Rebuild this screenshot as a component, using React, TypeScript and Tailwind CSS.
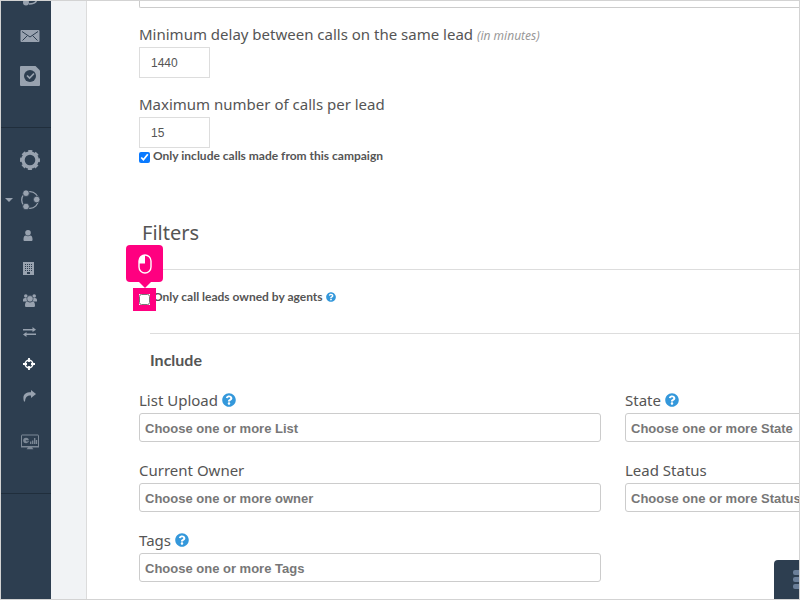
import type { ReactNode } from "react";
import { FaQuestionCircle } from "react-icons/fa";

function HeadsetIcon() {
    return (
        <svg className="w-5 h-5" viewBox="0 0 20 20" fill="none" stroke="currentColor" strokeWidth="1.5">
            <path d="M2 12V9a7 7 0 0 1 14 0v3M17 12c0 4-3 6-8 6" />
            <circle cx="6" cy="16.500" r="3" fill="currentColor" stroke="none" />
        </svg>
    );
}

function EnvelopeIcon() {
    return (
        <svg className="w-5 h-3" viewBox="0 0 20 12">
            <rect x="0.500" width="19" height="12" rx="1" fill="currentColor" />
            <path d="M2 1.500l8 5.500 8-5.500M2.500 10.500l5-5M17.500 10.500l-5-5" fill="none" stroke="#2d3e50" strokeWidth="1" />
        </svg>
    );
}

function TaskIcon() {
    return (
        <svg className="w-5 h-5" viewBox="0 0 20 20">
            <path d="M1 0h14.500L20 4.500V19a1 1 0 0 1-1 1H1a1 1 0 0 1-1-1V1a1 1 0 0 1 1-1z" fill="currentColor" />
            <circle cx="10" cy="10" r="6" fill="#2d3e50" />
            <path d="M7 9.500l2.600 2.600 4.400-4.600" fill="none" stroke="currentColor" strokeWidth="1.700" />
        </svg>
    );
}

function GearIcon() {
    return (
        <svg className="w-5 h-5" viewBox="0 0 20 20" fill="none" stroke="currentColor">
            <circle cx="10" cy="10" r="8.500" strokeWidth="3" strokeDasharray="3.900 2.776" strokeDashoffset="1.950" />
            <circle cx="10" cy="10" r="7" strokeWidth="3.400" />
        </svg>
    );
}

function CampaignIcon() {
    return (
        <svg className="w-5 h-5" viewBox="0 0 20 20">
            <circle cx="10" cy="10" r="8.300" fill="none" stroke="currentColor" strokeWidth="1.300" />
            <g fill="currentColor" stroke="#2d3e50" strokeWidth="0.800">
                <circle cx="6" cy="3.200" r="3.300" />
                <circle cx="16.700" cy="9.500" r="3.300" />
                <circle cx="6" cy="16.500" r="3.300" />
            </g>
        </svg>
    );
}

function UserIcon() {
    return (
        <svg className="w-2.5 h-3" viewBox="0 0 10 12" fill="currentColor">
            <circle cx="5" cy="2.800" r="2.800" />
            <path d="M0.500 9c0-2 .8-3.600 2.200-3.600 1.400 1 3.200 1 4.600 0C8.700 5.400 9.500 7 9.500 9v1c0 .7-.5 1-1.300 1H1.800c-.8 0-1.300-.3-1.300-1z" />
        </svg>
    );
}

function BuildingIcon() {
    return (
        <svg className="w-3 h-[13px]" viewBox="0 0 12 13">
            <path d="M0 0h11v13H0z" fill="currentColor" />
            <path d="M2 2.500h7M2 4.500h7M2 6.500h7M2 8.500h7" stroke="#2d3e50" strokeDasharray="1 1" />
            <path d="M4 10h3v2H4z" fill="#2d3e50" />
        </svg>
    );
}

function GroupIcon() {
    return (
        <svg className="w-3.5 h-[13px]" viewBox="0 0 14 13" fill="currentColor">
            <circle cx="2.800" cy="2" r="1.800" />
            <circle cx="11.200" cy="2" r="1.800" />
            <path d="M0 7.500V6c0-1.300.8-2 2-2h2v3.500zM14 7.500V6c0-1.300-.8-2-2-2h-2v3.500z" />
            <circle cx="7" cy="4.800" r="3.200" stroke="#2d3e50" strokeWidth="0.600" />
            <path d="M2 11.500c0-2.500.8-4 2.500-4 1.600 1.200 3.400 1.200 5 0 1.700 0 2.500 1.500 2.500 4 0 1-.6 1.500-1.500 1.500h-7c-.9 0-1.500-.5-1.500-1.500z" />
        </svg>
    );
}

function ExchangeIcon() {
    return (
        <svg className="w-[13px] h-2.5" viewBox="0 0 13 10" fill="currentColor">
            <path d="M0 2h9.500V0L13 2.700 9.500 5V3.400H0zM13 6.600H3.500V5L0 7.400 3.500 10V8H13z" />
        </svg>
    );
}

function CrosshairIcon() {
    return (
        <svg className="w-3 h-3 text-white" viewBox="0 0 12 12" fill="none" stroke="currentColor">
            <circle cx="6" cy="6" r="3.800" strokeWidth="1.500" />
            <path d="M6 0v4M6 8v4M0 6h4M8 6h4" strokeWidth="1.800" />
        </svg>
    );
}

function ForwardIcon() {
    return (
        <svg className="w-[13px] h-3" viewBox="0 0 13 12" fill="currentColor">
            <path d="M8 0l5 4-5 4V5.600C4.500 5.400 2.600 6.500 2 11.500H1C-.8 5.500 1.500 2.300 8 2.300z" />
        </svg>
    );
}

function MonitorIcon() {
    return (
        <svg className="w-5 h-4 opacity-75" viewBox="0 0 20 16">
            <rect x="1.500" y="1" width="17" height="11.500" rx="0.500" fill="none" stroke="currentColor" />
            <path d="M1 12h18v1.500H1zM8 13.500h4l1.500 1.700h-7z" fill="currentColor" />
            <circle cx="6" cy="6.500" r="2.800" fill="currentColor" />
            <path d="M6 6.500h3M6 6.500l2 2" stroke="#2d3e50" strokeWidth="0.700" />
            <path d="M10.700 10V7.500M12.700 10V6.500M14.700 10V4M16.500 10V6" stroke="currentColor" strokeWidth="1.300" />
        </svg>
    );
}

function NavItem({ label, children }: { label: string; children: ReactNode }) {
    return (
        <a href="#" aria-label={label} className="flex items-center h-10 pl-[19px]">
            {children}
        </a>
    );
}

function SubItem({ label, children }: { label: string; children: ReactNode }) {
    return (
        <a href="#" aria-label={label} className="flex items-center h-8 pl-[22px]">
            {children}
        </a>
    );
}

function Sidebar() {
    return (
        <nav className="w-[50px] shrink-0 overflow-hidden bg-[#2d3e50] text-[#98a2af]">
            <div className="-mt-[25px] pb-[31px] border-b border-[#202e3c]">
                <NavItem label="Calls"><HeadsetIcon /></NavItem>
                <NavItem label="Messages"><EnvelopeIcon /></NavItem>
                <NavItem label="Tasks"><TaskIcon /></NavItem>
            </div>
            <div className="pt-3 pb-[31px] border-b border-[#202e3c]">
                <NavItem label="Settings"><GearIcon /></NavItem>
                <a href="#" aria-label="Campaigns" className="flex items-center h-10 gap-[7px] pl-1">
                    <svg className="w-2 h-1" viewBox="0 0 8 4" fill="currentColor">
                        <path d="M0 0h8L4 4z" />
                    </svg>
                    <CampaignIcon />
                </a>
                <SubItem label="Users"><UserIcon /></SubItem>
                <SubItem label="Offices"><BuildingIcon /></SubItem>
                <SubItem label="Teams"><GroupIcon /></SubItem>
                <SubItem label="Transfers"><ExchangeIcon /></SubItem>
                <SubItem label="Targets"><CrosshairIcon /></SubItem>
                <SubItem label="Forwarding"><ForwardIcon /></SubItem>
                <div className="pt-2.5">
                    <NavItem label="Dashboards"><MonitorIcon /></NavItem>
                </div>
            </div>
        </nav>
    );
}

function NumberField({ id, label, hint, value }: { id: string; label: string; hint?: string; value: string }) {
    return (
        <div>
            <label htmlFor={id} className="block text-[15px] leading-[26px]">
                {label} {hint && <em className="text-xs text-[#999]">{hint}</em>}
            </label>
            <input
                id={id}
                type="text"
                defaultValue={value}
                className="block w-[71px] h-[31px] pl-[11px] border border-[#ddd] font-['Liberation_Sans',sans-serif] text-xs"
            />
        </div>
    );
}

function FilterField({ id, label, placeholder, help }: { id: string; label: string; placeholder: string; help?: boolean }) {
    return (
        <div>
            <div className="flex items-center gap-1">
                <label htmlFor={id} className="text-[15px] leading-[26px]">{label}</label>
                {help && <FaQuestionCircle className="w-3.5 h-3.5 text-[#3498db]" />}
            </div>
            <input
                id={id}
                type="text"
                placeholder={placeholder}
                className="block w-full h-[29px] px-[5px] pt-0.5 border border-[#ccc] rounded-[3px] font-['Liberation_Sans',sans-serif] text-[13px] font-bold placeholder:text-[#777]"
            />
        </div>
    );
}

// click hint that sits over the checkbox
function ClickMarker() {
    return (
        <div className="absolute -left-[13px] -top-[44px] flex flex-col items-center w-[37px] pointer-events-none">
            <div className="flex items-center justify-center w-full h-[37px] rounded bg-[#ff0080]">
                <svg className="w-3.5 h-5" viewBox="0 0 14 20">
                    <rect x="1" y="1" width="12" height="18" rx="6" fill="none" stroke="#fff" strokeWidth="1.400" />
                    <path d="M7 1v8.500H1V7a6 6 0 0 1 6-6z" fill="#fff" />
                </svg>
            </div>
            <svg className="w-3 h-1.5" viewBox="0 0 12 6" fill="#ff0080">
                <path d="M0 0h12L6 6z" />
            </svg>
            <div className="w-[23px] h-[23px] border-[6px] border-[#ff0080]" />
        </div>
    );
}

export default function App() {
    return (
        <div className="relative flex min-h-screen overflow-hidden border border-[#d3d3d3] bg-white text-[#555] font-['Noto_Sans',sans-serif]">
            <Sidebar />
            <div className="w-9 shrink-0 bg-[#f1f3f5] border-r border-[#dcdcdc]" />
            <main className="flex-1 min-w-0 overflow-hidden pl-[52px] pb-4">
                <textarea
                    aria-label="Notes"
                    className="block w-full h-[7px] mb-[13px] border border-t-0 border-r-0 border-[#ccc] rounded-bl-xs resize-none"
                />
                <section>
                    <div className="flex flex-col gap-[13px]">
                        <NumberField id="delay" label="Minimum delay between calls on the same lead" hint="(in minutes)" value="1440" />
                        <NumberField id="max-calls" label="Maximum number of calls per lead" value="15" />
                    </div>
                    <div className="flex items-start gap-[3px] h-4 font-['Lato',sans-serif] text-xs leading-4 font-bold">
                        <input id="campaign-only" type="checkbox" defaultChecked className="w-[11px] h-[11px] mt-1 accent-[#0a7aff]" />
                        <label htmlFor="campaign-only">Only include calls made from this campaign</label>
                    </div>
                </section>

                <section className="mt-[53px]">
                    <h2 className="pl-[3px] text-xl leading-8">Filters</h2>
                    <hr className="mt-5 border-[#ddd]" />
                    <div className="relative flex items-start gap-[3px] h-4 mt-[19px] font-['Lato',sans-serif] text-xs leading-4 font-bold">
                        <input id="owned" type="checkbox" className="w-[11px] h-[11px] mt-[5px]" />
                        <label htmlFor="owned">Only call leads owned by agents</label>
                        <FaQuestionCircle className="w-2.5 h-2.5 self-center text-[#3498db]" />
                        <ClickMarker />
                    </div>
                    <hr className="mt-7 ml-[11px] border-[#ddd]" />
                    <h3 className="mt-3.5 pl-[11px] font-['Lato',sans-serif] text-base leading-6 font-bold">Include</h3>
                    <div className="grid grid-cols-[70%_70%] gap-x-6 gap-y-[15px] mt-[15px]">
                        <FilterField id="list" label="List Upload" placeholder="Choose one or more List" help />
                        <FilterField id="state" label="State" placeholder="Choose one or more State" help />
                        <FilterField id="owner" label="Current Owner" placeholder="Choose one or more owner" />
                        <FilterField id="status" label="Lead Status" placeholder="Choose one or more Status" />
                        <FilterField id="tags" label="Tags" placeholder="Choose one or more Tags" help />
                    </div>
                </section>
            </main>
            <button
                type="button"
                aria-label="Open panel"
                className="absolute right-0 bottom-0 flex flex-col items-end justify-center gap-0.5 w-[25px] h-[39px] rounded-tl bg-[#2d3e50]"
            >
                <span className="w-1.5 h-[5px] rounded-l-xs bg-[#6b7f99]" />
                <span className="w-1.5 h-[5px] rounded-l-xs bg-[#6b7f99]" />
                <span className="w-1.5 h-[5px] rounded-l-xs bg-[#6b7f99]" />
            </button>
        </div>
    );
}
